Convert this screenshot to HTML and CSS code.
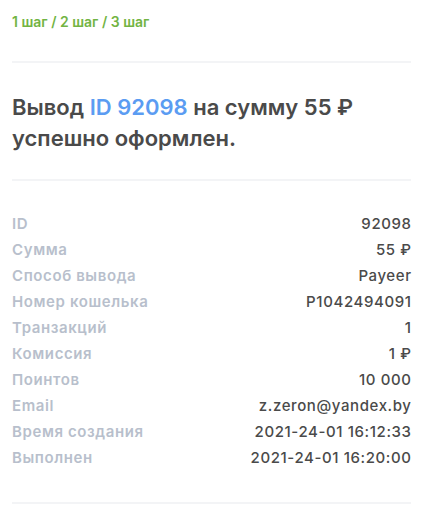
FILE: index.html
```
<!DOCTYPE html>
<html lang="ru">
<head>
    <meta charset="UTF-8">
    <meta name="viewport" content="width=device-width, initial-scale=1.0">
    <title>Вывод средств</title>
    <link rel="stylesheet" href="styles.css">
</head>
<body>
    <div class="container">
        <div class="steps">1 шаг / 2 шаг / 3 шаг</div>
        <hr class="divider">
        <h1 class="title">Вывод <span class="accent">ID 92098</span> на сумму 55 ₽ успешно оформлен.</h1>
        <hr class="divider">
        <div class="details">
            <div class="row"><span class="label">ID</span><span class="value">92098</span></div>
            <div class="row"><span class="label">Сумма</span><span class="value">55 ₽</span></div>
            <div class="row"><span class="label">Способ вывода</span><span class="value">Payeer</span></div>
            <div class="row"><span class="label">Номер кошелька</span><span class="value">P1042494091</span></div>
            <div class="row"><span class="label">Транзакций</span><span class="value">1</span></div>
            <div class="row"><span class="label">Комиссия</span><span class="value">1 ₽</span></div>
            <div class="row"><span class="label">Поинтов</span><span class="value">10 000</span></div>
            <div class="row"><span class="label">Email</span><span class="value">z.zeron@yandex.by</span></div>
            <div class="row"><span class="label">Время создания</span><span class="value">2021-24-01 16:12:33</span></div>
            <div class="row"><span class="label">Выполнен</span><span class="value">2021-24-01 16:20:00</span></div>
        </div>
        <hr class="divider">
    </div>
</body>
</html>
```

FILE: styles.css
```
body {
    font-family: Inter, "Noto Sans", sans-serif;
    margin: 0;
    padding: 0;
    background-color: #fff;
    color: #4a4a4a;
}
.container {
    width: 399px;
    margin: 0 0 0 12px;
    padding-top: 12px;
}
.steps {
    font-size: 14px;
    line-height: 20px;
    font-weight: 600;
    color: #72b443;
    margin-bottom: 29px;
}
.divider {
    border: 0;
    border-top: 2px solid #f3f4f6;
    margin: 0;
}
.title {
    font-size: 22px;
    line-height: 31px;
    font-weight: 600;
    margin: 29px 0 25px;
    color: #4a4a4a;
}
.accent {
    color: #5b9cf2;
}
.details {
    padding: 30px 0 31px;
}
.row {
    display: flex;
    justify-content: space-between;
    font-size: 15px;
    line-height: 26px;
    font-weight: 500;
    letter-spacing: 0.6px;
}
.label {
    color: #b8bfcc;
    font-weight: 600;
}
.value {
    color: #4a4a4a;
    margin-right: -0.6px;
}
```
